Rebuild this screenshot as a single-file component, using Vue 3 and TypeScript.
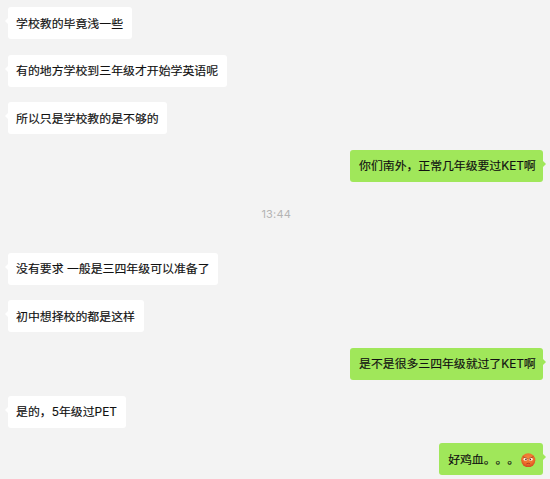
<template>
  <div class="chat">
    <div
      v-for="item in items"
      :key="item.id"
      class="row"
      :class="item.kind"
    >
      <span v-if="item.kind === 'time'" class="time-text">{{ item.text }}</span>
      <div v-else class="bubble">
        <span class="text">{{ item.text }}</span>
        <svg v-if="item.emoji" class="emoji" viewBox="0 0 28 28">
          <defs>
            <radialGradient id="face" cx="50%" cy="35%" r="65%">
              <stop offset="0" stop-color="#f58a3c" />
              <stop offset="0.65" stop-color="#ee6d2c" />
              <stop offset="1" stop-color="#cf4420" />
            </radialGradient>
          </defs>
          <circle cx="14" cy="14" r="13.6" fill="url(#face)" />
          <ellipse cx="8.5" cy="12" rx="3.6" ry="3.2" fill="#fff0dc" />
          <ellipse cx="19" cy="12" rx="3.6" ry="3.2" fill="#fff0dc" />
          <path d="M4 7.5l8 3M23.5 7.5l-8 3" stroke="#a3421c" stroke-width="1.6" stroke-linecap="round" />
          <circle cx="9.5" cy="12.5" r="1.6" fill="#5b2414" />
          <circle cx="18" cy="12.5" r="1.6" fill="#5b2414" />
          <path d="M11 20.5q3-1.8 6 0" fill="none" stroke="#a83a1a" stroke-width="1.6" stroke-linecap="round" />
        </svg>
      </div>
    </div>
  </div>
</template>

<script setup lang="ts">
interface ChatItem {
  id: number
  kind: 'left' | 'right' | 'time'
  text: string
  emoji?: boolean
}

const items: ChatItem[] = [
  { id: 1, kind: 'left', text: '学校教的毕竟浅一些' },
  { id: 2, kind: 'left', text: '有的地方学校到三年级才开始学英语呢' },
  { id: 3, kind: 'left', text: '所以只是学校教的是不够的' },
  { id: 4, kind: 'right', text: '你们南外，正常几年级要过KET啊' },
  { id: 5, kind: 'time', text: '13:44' },
  { id: 6, kind: 'left', text: '没有要求 一般是三四年级可以准备了' },
  { id: 7, kind: 'left', text: '初中想择校的都是这样' },
  { id: 8, kind: 'right', text: '是不是很多三四年级就过了KET啊' },
  { id: 9, kind: 'left', text: '是的，5年级过PET' },
  { id: 10, kind: 'right', text: '好鸡血。。。', emoji: true }
]
</script>

<style>
body {
  background: #f3f3f3;
}
</style>

<style scoped>
.chat {
  box-sizing: border-box;
  height: 479px;
  padding: 7px 7px 0 7.5px;
  overflow: hidden;
  background: #f3f3f3;
  font-family: Inter, "Noto Sans CJK SC", sans-serif;
  font-size: 11.9px;
  color: #111;
  text-spacing-trim: space-all;
}

.row {
  display: flex;
  height: 32px;
  margin-bottom: 15.65px;
}

.row.right {
  justify-content: flex-end;
}

.row.time {
  height: 39.5px;
  justify-content: center;
  align-items: center;
}

.time-text {
  margin: -6.5px 0 0 2px;
  font-size: 11px;
  letter-spacing: 0.2px;
  color: #b4b4b4;
}

.bubble {
  position: relative;
  display: flex;
  align-items: center;
  box-sizing: border-box;
  height: 32px;
  padding: 1px 8.7px 0 8.5px;
  border-radius: 3px;
  background: #fff;
  line-height: 18px;
  white-space: nowrap;
}

.right .bubble {
  padding: 1px 7.3px 0 9px;
  background: #a0e75a;
}

.text {
  -webkit-text-stroke: 0.15px currentColor;
}

.right .text {
  letter-spacing: -0.05px;
}

/* bubble tail */
.bubble::before {
  content: '';
  position: absolute;
  top: 10px;
  left: -3px;
  border: 4px solid transparent;
  border-left-width: 0;
  border-right-color: #fff;
}

.right .bubble::before {
  left: auto;
  right: -3px;
  border-width: 4px 0 4px 4px;
  border-left-color: #a0e75a;
}

.emoji {
  width: 14.5px;
  height: 14.5px;
  margin-left: 2px;
}
</style>
